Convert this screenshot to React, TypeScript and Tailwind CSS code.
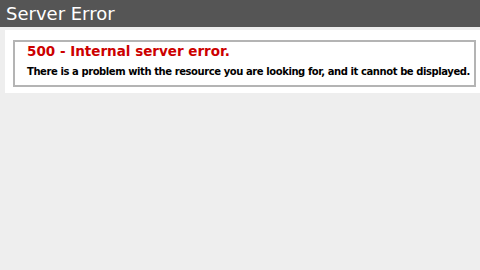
export default function App() {
  return (
    <div className="w-[480px] h-[270px] overflow-hidden bg-[#eeeeee] font-['DejaVu_Sans',Verdana,sans-serif]">
      <div className="h-[27px] bg-[#555555] pl-[6px] pt-[2px]">
        <h1 className="text-[18px] leading-[24px] text-white">Server Error</h1>
      </div>
      <div className="ml-[5px] mt-[3px] w-[490px] bg-white pl-[8px] pt-[10px] pb-[6px]">
        <fieldset className="w-[463px] border-2 border-[#b4b4b4] pl-[12px] pt-[1px] pb-[7px]">
          <h2 className="text-[13.5px] leading-[16px] font-bold text-[#cc0000]">500 - Internal server error.</h2>
          <h3 className="mt-[7px] text-[10px] leading-[12px] font-bold tracking-[-0.42px] whitespace-nowrap text-black">
            There is a problem with the resource you are looking for, and it cannot be displayed.
          </h3>
        </fieldset>
      </div>
    </div>
  );
}
